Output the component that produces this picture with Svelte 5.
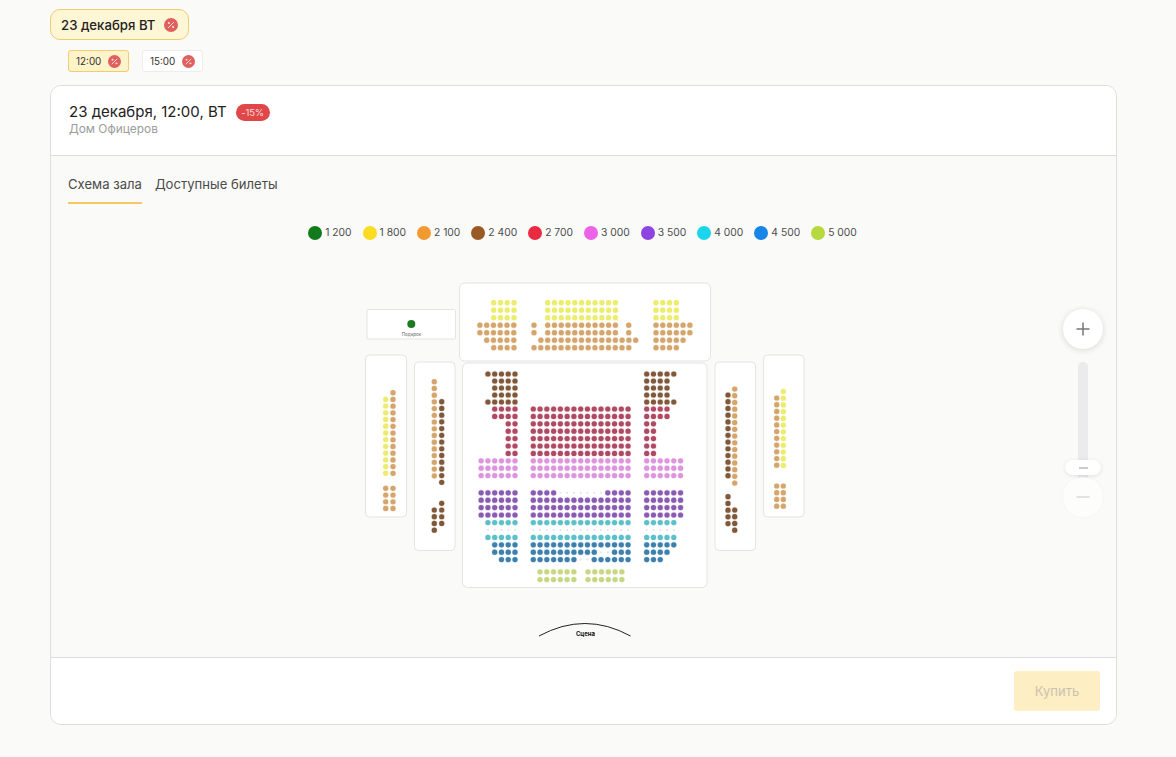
<script>
  const C = { y:'#ecec6e', t:'#d5a56c', b:'#80593a', r:'#b04a62', p:'#dd95de', v:'#895bb2', c:'#5cc0ca', u:'#3d80ad', l:'#c8d882' };
  const legend = [['#137a1c','1 200'],['#fbdc20','1 800'],['#f19a30','2 100'],['#9a5a26','2 400'],['#e92a40','2 700'],['#ec63e8','3 000'],['#8c45e0','3 500'],['#1bd5ec','4 000'],['#1585e8','4 500'],['#b5d93f','5 000']];
  const P = 6.77;
  const seats = [], faint = [];
  const hrow = (y, x0, n, k) => { for (let i = 0; i < n; i++) seats.push({ x: x0 + i * P, y, k }); };
  const hfaint = (y, x0, n) => { for (let i = 0; i < n; i++) faint.push({ x: x0 + i * P, y }); };
  const vcol = (x, y0, n, k, pitch = 6.72) => { for (let i = 0; i < n; i++) seats.push({ x, y: y0 + i * pitch, k }); };

  // balcony
  [302.7, 310.2, 317.7].forEach((y) => { hrow(y, 493.7, 4, 'y'); hrow(y, 547.7, 11, 'y'); hrow(y, 656, 4, 'y'); });
  [325.2, 332.7].forEach((y) => { hrow(y, 479.9, 6, 't'); seats.push({ x: 534, y, k: 't' }); hrow(y, 547.7, 11, 't'); seats.push({ x: 628.7, y, k: 't' }); hrow(y, 656, 6, 't'); });
  hrow(340.2, 486.7, 5, 't'); hrow(340.2, 540.9, 15, 't'); hrow(340.2, 656, 5, 't');
  hrow(347.7, 493.7, 4, 't'); hrow(347.7, 534, 15, 't'); hrow(347.7, 656, 4, 't');

  // main hall
  const L = 515, CX = 533.3, R = 646.7;
  const left = (y, n, k) => hrow(y, L - (n - 1) * P, n, k);
  const right = (y, n, k) => hrow(y, R, n, k);
  const center = (y, k) => hrow(y, CX, 15, k);
  [374, 402].forEach((y) => { left(y, 5, 'b'); right(y, 5, 'b'); });
  [381, 388, 395].forEach((y) => { left(y, 4, 'b'); right(y, 4, 'b'); });
  [409, 416.4].forEach((y) => { left(y, 4, 'r'); right(y, 4, 'r'); });
  [423.8, 431.2, 438.6, 446, 453.4].forEach((y) => { left(y, 2, 'r'); right(y, 2, 'r'); });
  [409, 416.4, 423.8, 431.2, 438.6, 446, 453.4].forEach((y) => center(y, 'r'));
  [460.8, 468.2, 475.6].forEach((y) => { left(y, 6, 'p'); center(y, 'p'); right(y, 6, 'p'); });
  [492.8, 500.2, 507.6, 515].forEach((y) => { left(y, 6, 'v'); right(y, 6, 'v'); });
  hrow(492.8, CX, 4, 'v'); hfaint(492.8, CX + 4 * P, 7); hrow(492.8, CX + 11 * P, 4, 'v');
  [500.2, 507.6, 515].forEach((y) => center(y, 'v'));
  [522.6, 537.4].forEach((y) => { left(y, 5, 'c'); center(y, 'c'); right(y, 5, 'c'); });
  hfaint(530, L - 4 * P, 5); hfaint(530, CX, 15); hfaint(530, R, 5);
  left(544.8, 4, 'u'); center(544.8, 'u'); right(544.8, 5, 'u');
  left(552.2, 4, 'u'); hrow(552.2, CX, 10, 'u'); hfaint(552.2, CX + 10 * P, 2); hrow(552.2, CX + 12 * P, 3, 'u'); right(552.2, 4, 'u');
  left(559.6, 3, 'u'); hrow(559.6, CX, 7, 'u'); hfaint(559.6, CX + 7 * P, 2); hrow(559.6, CX + 9 * P, 6, 'u'); right(559.6, 3, 'u');
  [571.8, 579.6].forEach((y) => { hrow(y, 540, 6, 'l'); hrow(y, 588, 6, 'l'); });

  // sides
  vcol(385.7, 399.3, 12, 'y'); vcol(393, 392.7, 13, 't');
  vcol(385.7, 488.3, 4, 't'); vcol(393, 488.3, 4, 't');
  vcol(434.3, 381.7, 15, 't'); vcol(441.7, 401.7, 13, 'b');
  vcol(441.7, 503.3, 4, 'b'); vcol(434.3, 510, 4, 'b');
  vcol(728, 395, 13, 'b'); vcol(734.7, 389, 15, 't');
  vcol(728, 496.7, 5, 'b'); vcol(734.7, 510, 4, 'b');
  vcol(783.3, 391.5, 12, 'y'); vcol(776.7, 398, 11, 't');
  vcol(776.7, 486, 4, 't'); vcol(783.3, 486, 4, 't');

  const boxes = [
    [459.5, 283, 251, 78, 5], [462.5, 363, 244.5, 224.5, 5],
    [365.5, 355, 41, 162, 4], [414.5, 362, 40.5, 188.5, 4],
    [715, 362, 40.5, 188.5, 4], [763.5, 355, 40.5, 162, 4]
  ];
</script>

{#snippet pct(cls)}
  <svg class="pct {cls}" viewBox="0 0 14 14" aria-hidden="true">
    <circle cx="7" cy="7" r="7" fill="#e0605f" />
    <path d="M4.4 9.6 9.6 4.4" stroke="#fbe3e0" stroke-width="1" stroke-linecap="round" />
    <circle cx="4.9" cy="5" r="1.05" fill="#fbe3e0" />
    <circle cx="9.1" cy="9" r="1.05" fill="#fbe3e0" />
  </svg>
{/snippet}

<div class="page">
  <div class="dates">
    <button class="date">23 декабря ВТ {@render pct('big')}</button>
  </div>
  <div class="times">
    <button class="time on">12:00 {@render pct('small')}</button>
    <button class="time">15:00 {@render pct('small')}</button>
  </div>

  <section class="card">
    <header class="head">
      <div class="title">
        <h1>23 декабря, 12:00, ВТ</h1>
        <span class="off">-15%</span>
      </div>
      <p>Дом Офицеров</p>
    </header>

    <div class="body">
      <nav class="tabs">
        <span class="tab active">Схема зала</span>
        <span class="tab">Доступные билеты</span>
      </nav>

      <ul class="legend">
        {#each legend as [col, label]}
          <li><i style:background={col}></i>{label}</li>
        {/each}
      </ul>

      <div class="map">
        <svg class="plan" viewBox="360 280 450 360" width="450" height="360" role="img" aria-label="Схема зала">
          <rect x="367" y="309.5" width="88.5" height="29.5" rx="1" class="box" />
          {#each boxes as [x, y, w, h, r]}
            <rect {x} {y} width={w} height={h} rx={r} class="box" />
          {/each}
          <circle cx="411.3" cy="324" r="4" fill="#1a7a22" />
          <text x="411.5" y="335.5" class="gift">Подарок</text>
          {#each faint as s}
            <circle cx={s.x} cy={s.y} r="1" fill="#e2e2e2" />
          {/each}
          {#each seats as s}
            <circle cx={s.x} cy={s.y} r="2.6" fill={C[s.k]} stroke={C[s.k]} stroke-opacity="0.18" stroke-width="1.2" />
          {/each}
          <path d="M539 636 Q585 611 630.5 636" fill="none" stroke="#222" stroke-width="1" />
          <text x="585.5" y="636" class="stage">Сцена</text>
        </svg>

        <div class="zoom">
          <button class="round" aria-label="Приблизить">
            <svg viewBox="0 0 16 16" width="16" height="16"><path d="M8 1.5v13M1.5 8h13" stroke="#777" stroke-width="1.5" /></svg>
          </button>
          <div class="track"><span class="thumb"><b></b></span></div>
          <button class="round faded" aria-label="Отдалить">
            <svg viewBox="0 0 16 16" width="16" height="16"><path d="M1.5 8h13" stroke="#d8d8d8" stroke-width="1.5" /></svg>
          </button>
        </div>
      </div>
    </div>

    <footer class="foot">
      <button class="buy" disabled>Купить</button>
    </footer>
  </section>
</div>

<style>
  :global(body) { margin: 0; background: #fafaf8; }
  .page { box-sizing: border-box; height: 757px; padding: 9px 59px 0 50px; font-family: Inter, "Noto Sans", sans-serif; color: #1f1f1f; overflow: hidden; }
  button { font-family: inherit; cursor: pointer; }

  .dates { display: flex; height: 31px; }
  .date { display: flex; align-items: center; gap: 9px; box-sizing: border-box; width: 139px; height: 31px; padding: 0 10px; background: #fff6d6; border: 1px solid #edcd72; border-radius: 10px; font-size: 13.2px; font-weight: 500; color: #222; white-space: nowrap; }
  .pct { display: block; flex: none; }
  .pct.big { width: 14px; height: 14px; }
  .pct.small { width: 13px; height: 13px; }

  .times { display: flex; gap: 13px; margin: 10px 0 13px 18px; height: 22px; }
  .time { display: flex; align-items: center; gap: 7px; box-sizing: border-box; width: 61px; height: 22px; padding: 0 7px; background: #fff; border: 1px solid #ededed; border-radius: 3px; font-size: 9.9px; color: #333; white-space: nowrap; }
  .time.on { background: #fff3c9; border-color: #efcd71; }

  .card { box-sizing: border-box; width: 1067px; height: 640px; background: #fafaf8; border: 1px solid #dedede; border-radius: 11px; overflow: hidden; display: flex; flex-direction: column; }
  .head { box-sizing: border-box; height: 70px; padding: 16px 18px 0; background: #fff; border-bottom: 1px solid #dcdcdc; flex: none; }
  .title { display: flex; align-items: center; gap: 9px; height: 20px; }
  h1 { margin: 0; font-size: 15px; line-height: 20px; font-weight: 400; color: #222; white-space: nowrap; }
  .off { box-sizing: border-box; width: 34px; height: 17px; background: #e04749; border-radius: 9px; color: #fbdcdc; font-size: 9.5px; line-height: 17px; text-align: center; letter-spacing: -0.2px; }
  .head p { margin: -1px 0 0; font-size: 11.9px; line-height: 16px; color: #9c9c9c; }

  .body { flex: 1; min-height: 0; display: flex; flex-direction: column; }
  .tabs { display: flex; gap: 13px; padding: 0 17px; height: 48px; flex: none; }
  .tab { box-sizing: border-box; height: 48px; padding-top: 20px; font-size: 13.1px; line-height: 17px; color: #4a4a4a; white-space: nowrap; }
  .tab.active { border-bottom: 2px solid #f4c95f; }

  .legend { display: flex; justify-content: center; gap: 11px; margin: 21px 0 0; padding: 0 7px 0 5px; list-style: none; height: 15px; flex: none; }
  .legend li { display: flex; align-items: center; gap: 3px; font-size: 10.3px; line-height: 15px; color: #4c4c4c; white-space: nowrap; }
  .legend i { display: block; width: 14px; height: 14px; border-radius: 50%; }

  .map { position: relative; flex: 1; display: flex; justify-content: center; padding: 40px 0 0 3px; min-height: 0; }
  .plan { display: block; flex: none; }
  .box { fill: #fff; stroke: #e4e4e4; stroke-width: 1; }
  .gift { font-family: Inter, sans-serif; font-size: 4.6px; fill: #666; text-anchor: middle; }
  .stage { font-family: Inter, sans-serif; font-size: 6px; font-weight: 700; fill: #111; text-anchor: middle; }

  .zoom { position: absolute; left: 1012px; top: 69px; width: 40px; display: flex; flex-direction: column; align-items: center; }
  .round { display: flex; align-items: center; justify-content: center; width: 40px; height: 40px; padding: 0; border: 0; border-radius: 50%; background: #fff; box-shadow: 0 1px 6px rgba(0,0,0,.14); }
  .round.faded { background: #fdfdfc; box-shadow: 0 0 4px rgba(0,0,0,.03); margin-top: -1px; position: relative; }
  .track { position: relative; margin-top: 13px; width: 10px; height: 116px; background: #ebebed; border-radius: 5px 5px 0 0; }
  .thumb { position: absolute; z-index: 1; left: -13px; top: 98px; width: 36px; height: 15px; display: flex; align-items: center; justify-content: center; background: #fff; border-radius: 8px; box-shadow: 0 1px 4px rgba(0,0,0,.1); }
  .thumb b { display: block; width: 9px; height: 2px; background: #ccc; }

  .foot { box-sizing: border-box; height: 67px; flex: none; display: flex; align-items: flex-start; justify-content: flex-end; padding: 13px 16px 0 0; background: #fff; border-top: 1px solid #dcdcdc; }
  .buy { width: 86px; height: 40px; background: #fdeec4; border: 0; border-radius: 3px; font-size: 13px; color: #c9c3ae; }
</style>
